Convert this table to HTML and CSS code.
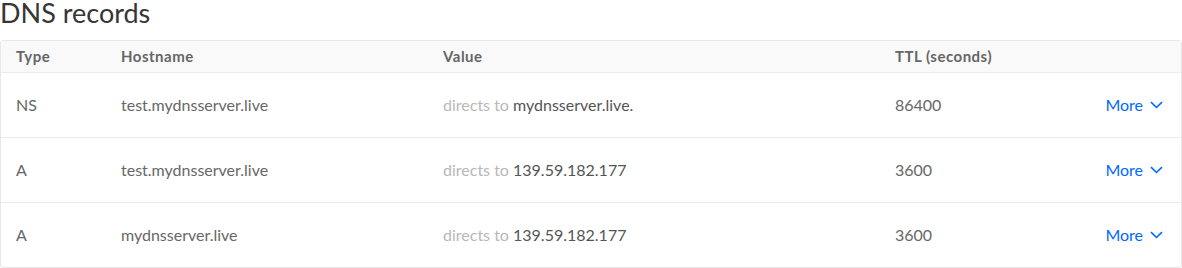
FILE: index.html
```html
<!DOCTYPE html>
<html>
<head>
<meta charset="utf-8">
<link rel="stylesheet" href="styles.css">
</head>
<body>
<h2 class="title">DNS records</h2>
<div class="table">
  <div class="row head">
    <div>Type</div><div>Hostname</div><div>Value</div><div>TTL (seconds)</div><div></div>
  </div>
  <div class="row">
    <div>NS</div><div>test.mydnsserver.live</div>
    <div><span class="muted">directs to</span> <span class="val">mydnsserver.live.</span></div>
    <div>86400</div>
    <div class="more">More <svg class="chev" width="13" height="8" viewBox="0 0 13 8"><path d="M1 1.2 L6.5 6.5 L12 1.2" fill="none" stroke="#0069ff" stroke-width="1.6"/></svg></div>
  </div>
  <div class="row">
    <div>A</div><div>test.mydnsserver.live</div>
    <div><span class="muted">directs to</span> <span class="val">139.59.182.177</span></div>
    <div>3600</div>
    <div class="more">More <svg class="chev" width="13" height="8" viewBox="0 0 13 8"><path d="M1 1.2 L6.5 6.5 L12 1.2" fill="none" stroke="#0069ff" stroke-width="1.6"/></svg></div>
  </div>
  <div class="row">
    <div>A</div><div>mydnsserver.live</div>
    <div><span class="muted">directs to</span> <span class="val">139.59.182.177</span></div>
    <div>3600</div>
    <div class="more">More <svg class="chev" width="13" height="8" viewBox="0 0 13 8"><path d="M1 1.2 L6.5 6.5 L12 1.2" fill="none" stroke="#0069ff" stroke-width="1.6"/></svg></div>
  </div>
</div>
</body>
</html>
```
FILE: styles.css
```css
html, body {
  margin: 0;
  padding: 0;
  background: #fff;
  font-family: Lato, "Liberation Sans", sans-serif;
}
.title {
  margin: 0;
  height: 28px;
  line-height: 26px;
  font-size: 27px;
  font-weight: 400;
  color: #363636;
  box-sizing: border-box;
}
.table {
  margin-top: 12px;
  width: 1182px;
  box-sizing: border-box;
  border: 1px solid #e8e8e8;
  border-radius: 3px;
}
.row {
  display: grid;
  grid-template-columns: 105px 322px 452px 1fr auto;
  align-items: center;
  padding: 0 18px 2px 15px;
  height: 65px;
  box-sizing: border-box;
  border-top: 1px solid #ececec;
  font-size: 16px;
  color: #676767;
}
.row.head {
  height: 32px;
  border-top: none;
  border-bottom: 1px solid #ececec;
  background: #f9f9f9;
  font-weight: 700;
  font-size: 15px;
  letter-spacing: 0.5px;
  color: #666;
}
.row.head + .row { border-top: none; height: 64px; }
.muted { color: #b8b8b8; }
.val { color: #555; }
.more {
  color: #0069ff;
  display: flex;
  align-items: center;
  gap: 7px;
}
.chev { margin-top: 2px; }
```
